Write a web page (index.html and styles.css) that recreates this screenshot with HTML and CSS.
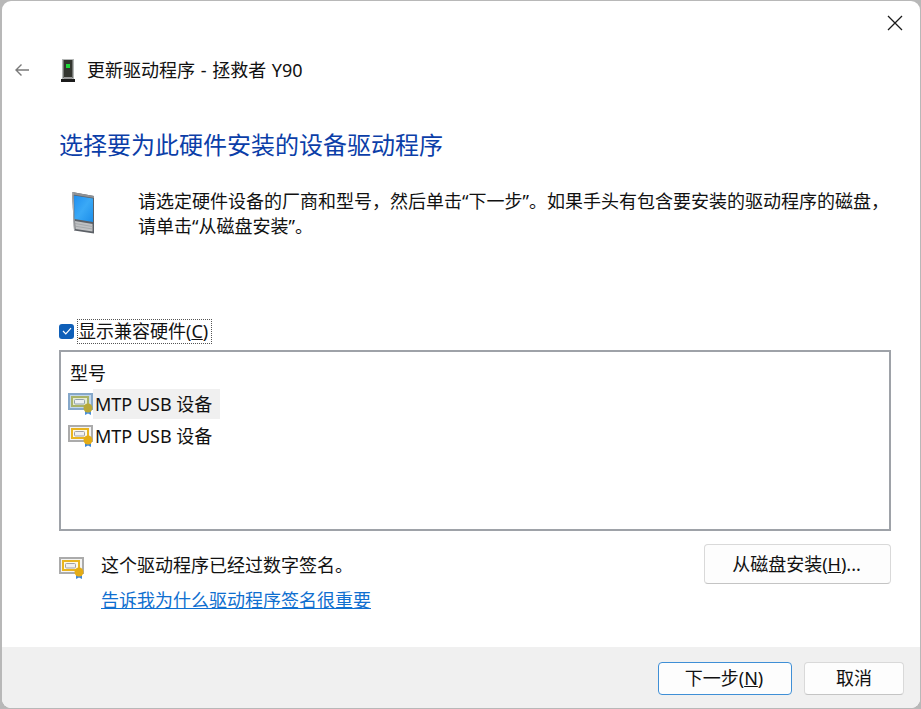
FILE: index.html
```html
<!DOCTYPE html>
<html lang="zh-CN">
<head>
<meta charset="utf-8">
<title>更新驱动程序</title>
<link rel="stylesheet" href="styles.css">
</head>
<body>
<div class="window">
  <div class="topbar">
    <svg class="close" width="16" height="16" viewBox="0 0 16 16"><path d="M1 1L15 15M15 1L1 15" stroke="#1a1a1a" stroke-width="1.3" fill="none"/></svg>
  </div>
  <div class="navbar">
    <svg class="back" width="16" height="14" viewBox="0 0 16 14"><path d="M15 7H2M7.500 1.500L2 7l5.500 5.500" stroke="#7a7a7a" stroke-width="1.4" fill="none"/></svg>
    <svg class="device" width="14" height="23" viewBox="0 0 14 23">
      <rect x="1" y="0" width="12" height="21" fill="#b4b7b6"/>
      <rect x="2.500" y="1" width="9" height="18" fill="#33352f"/>
      <rect x="5" y="5" width="4" height="4" fill="#1fd83a"/>
      <rect x="3" y="18" width="8" height="2" fill="#9a9a9a"/>
      <rect x="0" y="20" width="14" height="3" fill="#1b1b1b"/>
    </svg>
    <span class="navtitle">更新驱动程序 - 拯救者 Y90</span>
  </div>
  <main class="content">
    <h1 class="heading">选择要为此硬件安装的设备驱动程序</h1>
    <div class="intro">
      <svg class="pda" width="24" height="42" viewBox="0 0 24 42">
        <defs>
          <linearGradient id="screen" x1="0" y1="0" x2="1" y2="1">
            <stop offset="0" stop-color="#1f8ff0"/>
            <stop offset="0.500" stop-color="#3aa9f6"/>
            <stop offset="1" stop-color="#1c8eea"/>
          </linearGradient>
        </defs>
        <path d="M1 0L23 4V41.500L3 38.500Z" fill="#5c6066"/>
        <path d="M1 0L23 4V6L1 2.500Z" fill="#8e9195"/>
        <path d="M1 0L2.500 .500L4 38.700L3 38.500Z" fill="#a9abae"/>
        <path d="M3 3.500L22 6.500V30L3.500 27Z" fill="url(#screen)"/>
        <path d="M4 29L21.500 32V39.500L4.500 37Z" fill="#bfc1c3"/>
        <path d="M4 31.500L21.500 34.500M4.200 34.200L21.500 37" stroke="#9a9da0" stroke-width=".7" fill="none"/>
      </svg>
      <p class="intro-text">请选定硬件设备的厂商和型号，然后单击“下一步”。如果手头有包含要安装的驱动程序的磁盘，<br>请单击“从磁盘安装”。</p>
    </div>
    <label class="check-row">
      <span class="checkbox"><svg width="10" height="8" viewBox="0 0 10 8"><path d="M1 4l2.800 2.800L9 1.200" stroke="#fff" stroke-width="1.200" fill="none"/></svg></span>
      <span class="check-label">显示兼容硬件(<u>C</u>)</span>
    </label>
    <div class="listbox">
      <div class="list-head">型号</div>
      <div class="list-row">
        <svg class="cert" width="25" height="22" viewBox="0 0 25 22">
          <rect x="1" y="1" width="23" height="15" fill="#c2d8ec" stroke="#86a8ca" stroke-width="2"/>
          <rect x="4" y="4" width="16" height="9" fill="#e6ecd0" stroke="#a9b368" stroke-width="2"/>
          <rect x="6.500" y="6.500" width="10" height="4.500" rx="1" fill="#eef1f2" stroke="#8fa0ae"/>
          <path d="M17 16h6v6l-3-1.500-3 1.500z" fill="#4a90d9"/>
          <circle cx="20" cy="15" r="4.500" fill="#b8a838"/>
        </svg>
        <span class="row-name selected">MTP USB 设备</span>
      </div>
      <div class="list-row">
        <svg class="cert" width="25" height="22" viewBox="0 0 25 22">
          <rect x="1" y="1" width="23" height="15" fill="#f4f4f4" stroke="#ababab" stroke-width="2"/>
          <rect x="4" y="4" width="16" height="9" fill="#fff9e6" stroke="#e9b41f" stroke-width="2"/>
          <rect x="6.500" y="6.500" width="10" height="4.500" rx="1" fill="#f0f0f0" stroke="#a0a0a8"/>
          <path d="M17 16h6v6l-3-1.500-3 1.500z" fill="#3f87d6"/>
          <circle cx="20" cy="15" r="4.500" fill="#e4ac16"/>
        </svg>
        <span class="row-name">MTP USB 设备</span>
      </div>
    </div>
    <div class="sign-area">
      <svg class="cert sign-icon" width="25" height="22" viewBox="0 0 25 22">
        <rect x="1" y="1" width="23" height="15" fill="#f4f4f4" stroke="#ababab" stroke-width="2"/>
        <rect x="4" y="4" width="16" height="9" fill="#fff9e6" stroke="#e9b41f" stroke-width="2"/>
        <rect x="6.500" y="6.500" width="10" height="4.500" rx="1" fill="#f0f0f0" stroke="#a0a0a8"/>
        <path d="M17 16h6v6l-3-1.500-3 1.500z" fill="#3f87d6"/>
        <circle cx="20" cy="15" r="4.500" fill="#e4ac16"/>
      </svg>
      <div class="sign-text">
        <div class="signed">这个驱动程序已经过数字签名。</div>
        <a class="why" href="#">告诉我为什么驱动程序签名很重要</a>
      </div>
      <button class="btn disk" type="button">从磁盘安装(<u>H</u>)...</button>
    </div>
  </main>
  <footer class="footer">
    <button class="btn next" type="button">下一步(<u>N</u>)</button>
    <button class="btn cancel" type="button">取消</button>
  </footer>
</div>
</body>
</html>
```
FILE: styles.css
```css
* { box-sizing: border-box; }
html, body { margin: 0; height: 100%; }
body {
  background: #b8b8b8;
  padding: 1px 1px 1px 2px;
  overflow: hidden;
  font-family: "Noto Sans", "Noto Sans CJK SC", sans-serif;
  font-size: 18px;
  color: #111;
}
.window {
  height: 707px;
  background: #fff;
  border-radius: 9px;
  display: flex;
  flex-direction: column;
  overflow: hidden;
}
.topbar {
  height: 49px;
  display: flex;
  justify-content: flex-end;
  padding: 14px 17px 0 0;
}
.navbar {
  height: 40px;
  display: flex;
  align-items: center;
  padding-left: 12px;
}
.back { margin-right: 31px; }
.device { margin-right: 12px; }
.navtitle { line-height: 40px; white-space: nowrap; word-spacing: 1px; }
.content {
  flex: 1;
  padding: 0 29px 0 57px;
  display: flex;
  flex-direction: column;
}
.heading {
  margin: 37px 0 0;
  font-size: 24px;
  line-height: 36px;
  font-weight: 400;
  color: #0b3ea8;
}
.intro {
  display: flex;
  margin-top: 26px;
}
.pda { margin: 3px 0 0 12px; flex: none; }
.intro-text {
  margin: 0 0 0 43px;
  line-height: 25px;
  white-space: nowrap;
}
.check-row {
  display: flex;
  align-items: center;
  margin-top: 80px;
  height: 24px;
}
.checkbox {
  width: 15px;
  height: 15px;
  border-radius: 3px;
  background: #0f5fb8;
  display: flex;
  align-items: center;
  justify-content: center;
  margin-right: 3px;
}
.check-label {
  border: 1px dotted #555;
  height: 25px;
  line-height: 23px;
  padding-right: 3px;
  white-space: nowrap;
}
.listbox {
  margin-top: 7px;
  height: 181px;
  border: 2px solid #9ea2a8;
  padding: 6px 0 0 7px;
}
.list-head { line-height: 30px; padding-left: 2px; }
.list-row {
  display: flex;
  align-items: center;
  height: 32px;
}
.row-name {
  height: 30px;
  line-height: 30px;
  padding: 0 8px 0 2px;
  white-space: nowrap;
}
.selected { background: #f0f0f0; }
.sign-area {
  display: flex;
  margin-top: 12px;
}
.sign-icon { margin-top: 14px; flex: none; }
.sign-text { margin-left: 17px; flex: 1; }
.signed { line-height: 25px; margin-top: 10px; }
.why {
  display: block;
  margin-top: 10px;
  line-height: 25px;
  color: #0f6fd0;
}
.btn {
  font: inherit;
  color: #111;
  background: #fdfdfd;
  border: 1px solid #d9d9d9;
  border-bottom-color: #c4c4c4;
  border-radius: 4px;
  padding: 0 2px 3px 0;
}
.disk { width: 187px; height: 40px; flex: none; margin-top: 1px; }
.footer {
  height: 61px;
  flex: none;
  background: #f0f0f0;
  display: flex;
  justify-content: flex-end;
  align-items: flex-start;
  gap: 12px;
  padding: 15px 16px 0 0;
}
.next { width: 134px; height: 33px; border: 1px solid #3f8fd6; }
.cancel { width: 100px; height: 33px; padding-right: 0; }
```
